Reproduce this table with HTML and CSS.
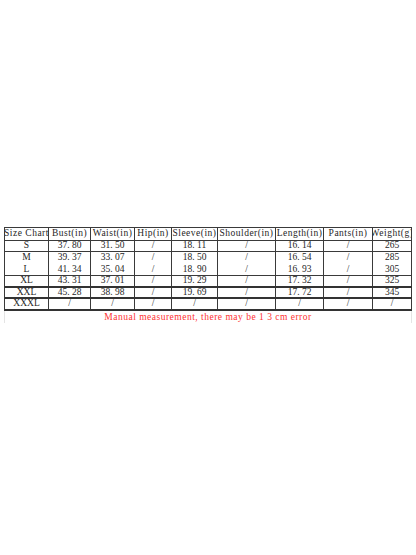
FILE: index.html
```html
<!DOCTYPE html>
<html>
<head>
<meta charset="utf-8">
<link rel="stylesheet" href="styles.css">
</head>
<body>
<div class="page">
  <div class="sheet">
    <div class="row head">
      <div class="c">Size Chart</div><div class="c">Bust(in)</div><div class="c">Waist(in)</div><div class="c">Hip(in)</div><div class="c">Sleeve(in)</div><div class="c">Shoulder(in)</div><div class="c">Length(in)</div><div class="c">Pants(in)</div><div class="c">Weight(g)</div>
    </div>
    <div class="row r11">
      <div class="c">S</div><div class="c">37. 80</div><div class="c">31. 50</div><div class="c">/</div><div class="c">18. 11</div><div class="c">/</div><div class="c">16. 14</div><div class="c">/</div><div class="c">265</div>
    </div>
    <div class="row r12 nob">
      <div class="c">M</div><div class="c">39. 37</div><div class="c">33. 07</div><div class="c">/</div><div class="c">18. 50</div><div class="c">/</div><div class="c">16. 54</div><div class="c">/</div><div class="c">285</div>
    </div>
    <div class="row r12">
      <div class="c">L</div><div class="c">41. 34</div><div class="c">35. 04</div><div class="c">/</div><div class="c">18. 90</div><div class="c">/</div><div class="c">16. 93</div><div class="c">/</div><div class="c">305</div>
    </div>
    <div class="row r12 thick">
      <div class="c">XL</div><div class="c">43. 31</div><div class="c">37. 01</div><div class="c">/</div><div class="c">19. 29</div><div class="c">/</div><div class="c">17. 32</div><div class="c">/</div><div class="c">325</div>
    </div>
    <div class="row r11 thick">
      <div class="c">XXL</div><div class="c">45. 28</div><div class="c">38. 98</div><div class="c">/</div><div class="c">19. 69</div><div class="c">/</div><div class="c">17. 72</div><div class="c">/</div><div class="c">345</div>
    </div>
    <div class="row r12 thick">
      <div class="c">XXXL</div><div class="c">/</div><div class="c">/</div><div class="c">/</div><div class="c">/</div><div class="c">/</div><div class="c">/</div><div class="c">/</div><div class="c">/</div>
    </div>
    <div class="note">Manual measurement, there may be 1 3 cm error</div>
  </div>
</div>
</body>
</html>
```

FILE: styles.css
```css
* { box-sizing: border-box; }
html, body { margin: 0; padding: 0; background: #fff; }
body { width: 416px; height: 555px; overflow: hidden; }
.page { padding: 227px 0 0 4px; }
.sheet {
  width: 408px;
  font-family: "Liberation Serif", "DejaVu Serif", serif;
  font-size: 9.5px;
  color: #262626;
}
.row {
  display: grid;
  grid-template-columns: 44px 42px 44px 37px 46px 58px 48px 49px 39px;
  border-left: 1px solid #3a3a3a;
  border-bottom: 1px solid #3a3a3a;
}
.head { border-top: 1px solid #3a3a3a; height: 14px; letter-spacing: 0.5px; }
.r11 { height: 11px; }
.r12 { height: 12px; }
.nob { border-bottom: none; }
.thick { border-bottom: 2px solid #333; }
.c {
  border-right: 1px solid #3a3a3a;
  overflow: hidden;
  white-space: pre;
  display: flex;
  align-items: center;
  justify-content: center;
  line-height: 1;
}
.note {
  border-left: 1px solid #e4e4e4;
  border-right: 1px solid #e4e4e4;
  height: 12px;
  padding-top: 2px;
  text-align: center;
  color: #ff3333;
  letter-spacing: 0.5px;
  line-height: 9px;
}
```
